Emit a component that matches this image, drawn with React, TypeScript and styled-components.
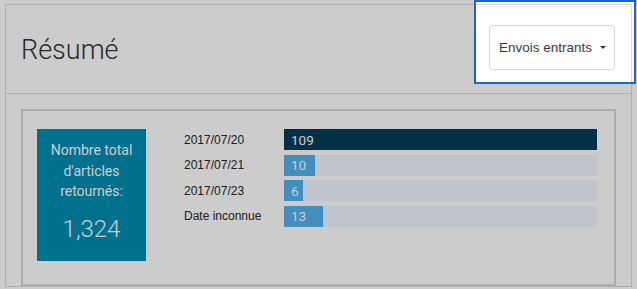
import React from "react";
import styled, { createGlobalStyle } from "styled-components";

const GlobalStyle = createGlobalStyle`
  html, body { margin: 0; padding: 0; background: #ffffff; }
  body { font-family: Roboto, "Noto Sans", sans-serif; color: #333333; }
  * { box-sizing: border-box; }
`;

const Page = styled.div`
  padding: 4px 5px;
  min-height: 289px;
`;

const Card = styled.section`
  border: 1px solid #dcdcdc;
  background: #ffffff;
`;

const Header = styled.header`
  height: 89px;
  display: flex;
  align-items: center;
  justify-content: space-between;
  padding: 0 16px 0 15px;
  border-bottom: 1px solid #dcdcdc;
`;

const Title = styled.h1`
  margin: 0;
  font-family: Roboto, sans-serif;
  font-weight: 300;
  font-size: 27px;
  color: #333333;
  position: relative;
  top: 1px;
`;

const DropButton = styled.button`
  height: 45px;
  width: 126px;
  padding: 0 0 0 9px;
  display: flex;
  align-items: center;
  border: 1px solid #d6d6d6;
  border-radius: 4px;
  background: #ffffff;
  font-family: "Liberation Sans", Arial, sans-serif;
  font-size: 13.5px;
  color: #3a3a3a;
  margin-top: -3px;
`;

const Caret = styled.span`
  width: 0;
  height: 0;
  border-left: 3px solid transparent;
  border-right: 3px solid transparent;
  border-top: 3px solid #333333;
  margin-left: 8px;
`;

const Body = styled.div`
  padding: 15px 15px 0 15px;
`;

const Panel = styled.div`
  border: 2px solid #d8d8d8;
  padding: 18px 17px 23px 14px;
  display: flex;
  align-items: flex-start;
`;

const TotalBox = styled.div`
  width: 109px;
  height: 132px;
  background: #008cb3;
  color: #ffffff;
  text-align: center;
  padding-top: 11px;
  display: flex;
  flex-direction: column;
  align-items: center;
`;

const TotalLabel = styled.div`
  font-size: 14px;
  line-height: 20.5px;
  width: 90px;
`;

const TotalValue = styled.div`
  font-weight: 300;
  font-size: 24px;
  line-height: 30px;
  margin-top: 12px;
`;

const Chart = styled.div`
  flex: 1;
  margin-left: 38px;
  display: grid;
  grid-template-columns: 100px 1fr;
  row-gap: 4.5px;
`;

const RowLabel = styled.div`
  height: 21px;
  display: flex;
  align-items: center;
  font-family: "Liberation Sans", Arial, sans-serif;
  font-size: 12px;
  color: #262626;
`;

const Track = styled.div`
  height: 21px;
  background: #f0f6ff;
`;

const Fill = styled.div<{ $max: boolean }>`
  height: 100%;
  background: ${(p) => (p.$max ? "#033c5c" : "#52b2ef")};
  display: flex;
  align-items: center;
  padding-left: 7px;
  font-family: Roboto, sans-serif;
  font-size: 13.5px;
  color: #ffffff;
  white-space: nowrap;
`;

const Spotlight = styled.div`
  position: absolute;
  left: 474px;
  top: 0;
  width: 162px;
  height: 84px;
  border: 2px solid #1a67d4;
  box-shadow: 0 0 0 3000px rgba(0, 0, 0, 0.2);
  pointer-events: none;
`;

const rows = [
  { label: "2017/07/20", value: 109 },
  { label: "2017/07/21", value: 10 },
  { label: "2017/07/23", value: 6 },
  { label: "Date inconnue", value: 13 },
];

export default function App() {
  const max = Math.max(...rows.map((r) => r.value));
  return (
    <>
      <GlobalStyle />
      <Page>
        <Card>
          <Header>
            <Title>Résumé</Title>
            <DropButton>
              Envois entrants
              <Caret />
            </DropButton>
          </Header>
          <Body>
            <Panel>
              <TotalBox>
                <TotalLabel>Nombre total d'articles retournés:</TotalLabel>
                <TotalValue>1,324</TotalValue>
              </TotalBox>
              <Chart>
                {rows.map((r) => {
                  const isMax = r.value === max;
                  const pct = (r.value / max) * 100;
                  return (
                    <React.Fragment key={r.label}>
                      <RowLabel>{r.label}</RowLabel>
                      <Track>
                        <Fill
                          $max={isMax}
                          style={{ width: isMax ? "100%" : `calc(${pct}% + 2px)` }}
                        >
                          {r.value}
                        </Fill>
                      </Track>
                    </React.Fragment>
                  );
                })}
              </Chart>
            </Panel>
          </Body>
        </Card>
      </Page>
      <Spotlight />
    </>
  );
}
